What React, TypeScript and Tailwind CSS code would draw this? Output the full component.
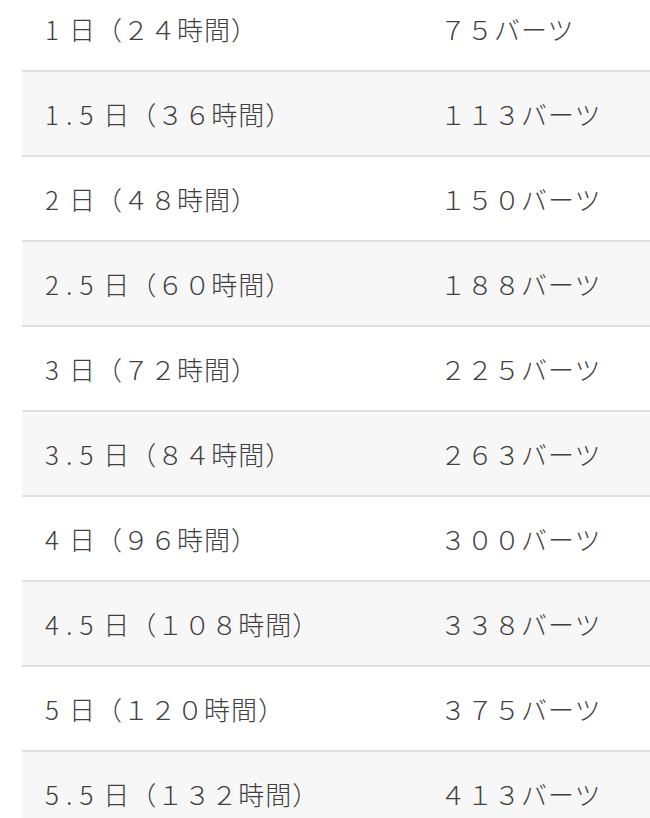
const rows: [string, string, string][] = [
  ["1", "日（２４時間）", "７５バーツ"],
  ["1.5", "日（３６時間）", "１１３バーツ"],
  ["2", "日（４８時間）", "１５０バーツ"],
  ["2.5", "日（６０時間）", "１８８バーツ"],
  ["3", "日（７２時間）", "２２５バーツ"],
  ["3.5", "日（８４時間）", "２６３バーツ"],
  ["4", "日（９６時間）", "３００バーツ"],
  ["4.5", "日（１０８時間）", "３３８バーツ"],
  ["5", "日（１２０時間）", "３７５バーツ"],
  ["5.5", "日（１３２時間）", "４１３バーツ"],
];

export default function App() {
  return (
    <div className="h-[818px] overflow-hidden bg-white pl-[22px] font-['Noto_Sans_CJK_JP','Noto_Sans',sans-serif] text-[26px] font-light tracking-[1px] text-[#404040]">
      <div className="-mt-[13px]">
        {rows.map(([num, label, price], i) => (
          <div
            key={num}
            className={`grid h-[85px] grid-cols-[418px_1fr] items-center border-b-2 border-[#e0e0e0] ${
              i % 2 === 1 ? "bg-[#f7f7f7]" : "bg-white"
            }`}
          >
            <span className="pl-[23px]">
              <span className="mr-[3px] tracking-[7px]">{num}</span>
              {label}
            </span>
            <span>{price}</span>
          </div>
        ))}
      </div>
    </div>
  );
}
